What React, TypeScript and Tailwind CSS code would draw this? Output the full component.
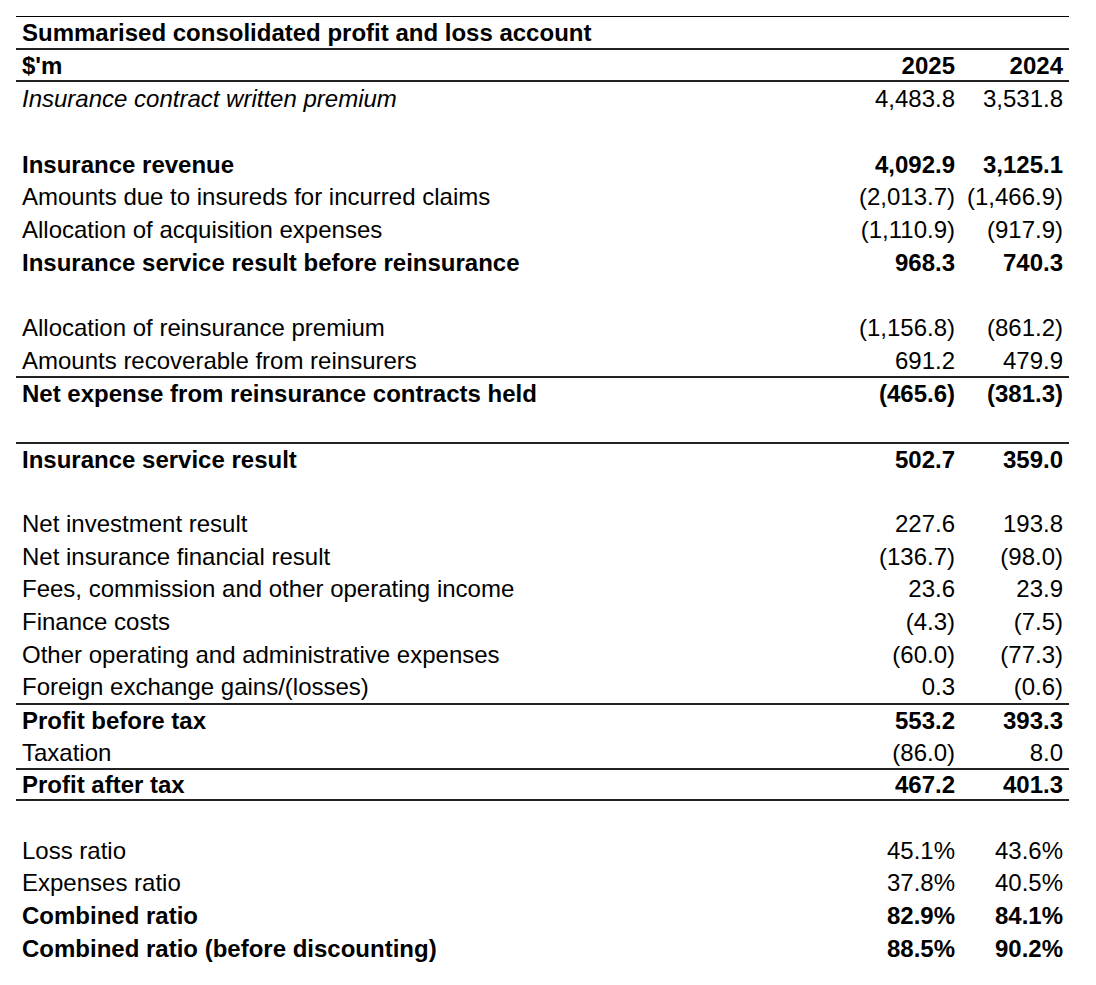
type Row = {
  label?: string;
  a?: string;
  b?: string;
  bold?: boolean;
  italic?: boolean;
  top?: boolean;
  bottom?: boolean;
};

const rows: Row[] = [
  { label: "Summarised consolidated profit and loss account", bold: true, bottom: true },
  { label: "$'m", a: "2025", b: "2024", bold: true, bottom: true },
  { label: "Insurance contract written premium", a: "4,483.8", b: "3,531.8", italic: true },
  {},
  { label: "Insurance revenue", a: "4,092.9", b: "3,125.1", bold: true },
  { label: "Amounts due to insureds for incurred claims", a: "(2,013.7)", b: "(1,466.9)" },
  { label: "Allocation of acquisition expenses", a: "(1,110.9)", b: "(917.9)" },
  { label: "Insurance service result before reinsurance", a: "968.3", b: "740.3", bold: true },
  {},
  { label: "Allocation of reinsurance premium", a: "(1,156.8)", b: "(861.2)" },
  { label: "Amounts recoverable from reinsurers", a: "691.2", b: "479.9" },
  { label: "Net expense from reinsurance contracts held", a: "(465.6)", b: "(381.3)", bold: true, top: true },
  {},
  { label: "Insurance service result", a: "502.7", b: "359.0", bold: true, top: true },
  {},
  { label: "Net investment result", a: "227.6", b: "193.8" },
  { label: "Net insurance financial result", a: "(136.7)", b: "(98.0)" },
  { label: "Fees, commission and other operating income", a: "23.6", b: "23.9" },
  { label: "Finance costs", a: "(4.3)", b: "(7.5)" },
  { label: "Other operating and administrative expenses", a: "(60.0)", b: "(77.3)" },
  { label: "Foreign exchange gains/(losses)", a: "0.3", b: "(0.6)" },
  { label: "Profit before tax", a: "553.2", b: "393.3", bold: true, top: true },
  { label: "Taxation", a: "(86.0)", b: "8.0" },
  { label: "Profit after tax", a: "467.2", b: "401.3", bold: true, top: true, bottom: true },
  {},
  { label: "Loss ratio", a: "45.1%", b: "43.6%" },
  { label: "Expenses ratio", a: "37.8%", b: "40.5%" },
  { label: "Combined ratio", a: "82.9%", b: "84.1%", bold: true },
  { label: "Combined ratio (before discounting)", a: "88.5%", b: "90.2%", bold: true },
];

export default function App() {
  return (
    <div className="min-h-screen bg-white pt-4 pl-4 text-black font-['Liberation_Sans',Arial,sans-serif] text-[24px] leading-none">
      <div className="w-[1053px] border-t border-black">
        {rows.map((r, i) => (
          <div
            key={i}
            className={
              "grid h-[32.68px] grid-cols-[1fr_108px_108px] items-center pl-[6px] pr-[6px] pt-px border-[#222] " +
              (r.top ? "border-t-2 " : "") +
              (r.bottom ? "border-b-2 " : "") +
              (r.bold ? "font-bold " : "")
            }
          >
            <span className={"whitespace-nowrap " + (r.italic ? "italic" : "")}>{r.label}</span>
            <span className="text-right whitespace-nowrap">{r.a}</span>
            <span className="text-right whitespace-nowrap">{r.b}</span>
          </div>
        ))}
      </div>
    </div>
  );
}
